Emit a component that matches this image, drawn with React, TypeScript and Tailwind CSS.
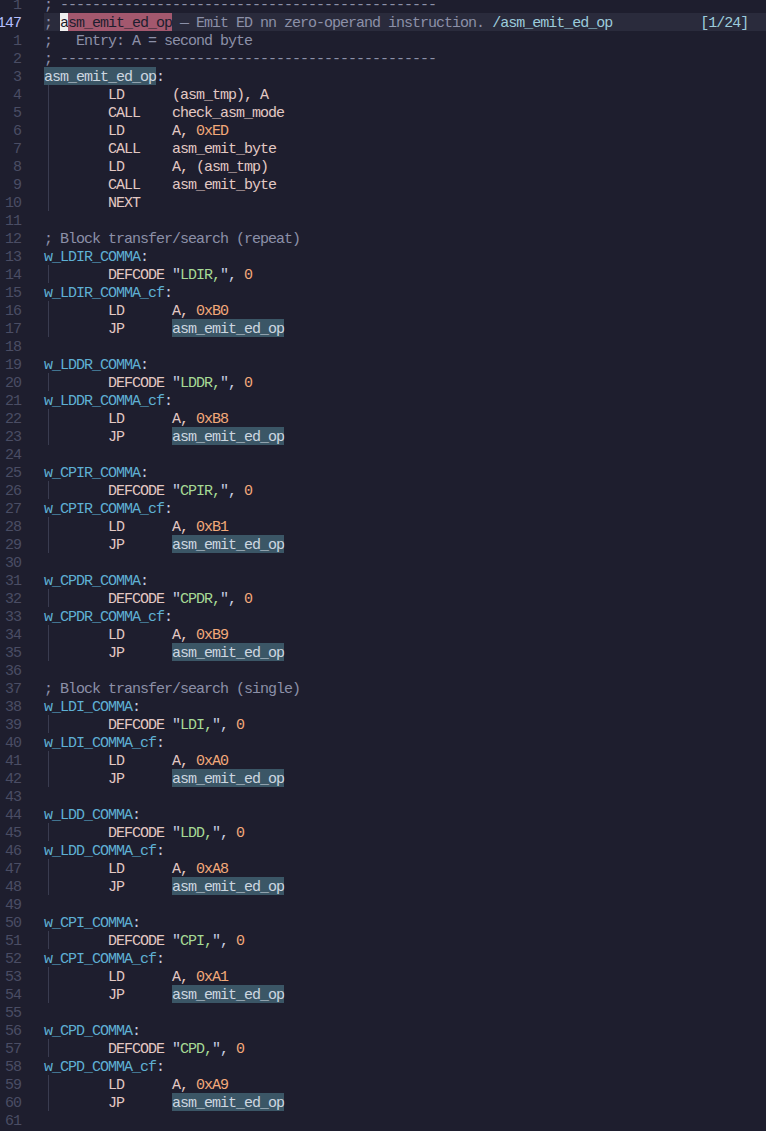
import React from "react";

type Seg = [string, string];
type Row = { segs: Seg[]; guide?: boolean; cur?: boolean };

const cmt = "text-[#8c90a8]";
const txt = "text-[#e2c8c3]";
const lbl = "text-[#5eb0d4]";
const pun = "text-[#c8cde0]";
const num = "text-[#f2a97a]";
const str = "text-[#a6da95]";
const srch = "bg-[#3b5666] text-[#cdd6e0]";
const virt = "text-[#9ccbdb]";

const dashes = "; " + "-".repeat(47);

const label = (name: string, hl = false): Row => ({
  segs: [
    [name, hl ? srch : lbl],
    [":", pun],
  ],
});

const ins = (op: string, ...rest: Seg[]): Row => ({
  guide: true,
  segs: [["       " + op.padEnd(8), txt], ...rest],
});

const block = (name: string, s: string, hex: string): Row[] => [
  label(`w_${name}_COMMA`),
  ins("DEFCODE", ['"', pun], [`${s},`, str], ['"', pun], [", ", pun], ["0", num]),
  label(`w_${name}_COMMA_cf`),
  ins("LD", ["A, ", txt], [hex, num]),
  ins("JP", ["asm_emit_ed_op", srch]),
  { segs: [] },
];

const rows: Row[] = [
  { segs: [[dashes, cmt]] },
  {
    cur: true,
    segs: [
      ["; ", cmt],
      ["a", "bg-[#f0f0f0] text-[#1e1e2e]"],
      ["sm_emit_ed_op", "bg-[#a3586e] text-[#1e1e2e]"],
      [" — Emit ED nn zero-operand instruction. ", cmt],
      ["/asm_emit_ed_op", virt],
      ["           ", cmt],
      ["[1/24]", virt],
    ],
  },
  { segs: [[";   Entry: A = second byte", cmt]] },
  { segs: [[dashes, cmt]] },
  label("asm_emit_ed_op", true),
  ins("LD", ["(asm_tmp), A", txt]),
  ins("CALL", ["check_asm_mode", txt]),
  ins("LD", ["A, ", txt], ["0xED", num]),
  ins("CALL", ["asm_emit_byte", txt]),
  ins("LD", ["A, (asm_tmp)", txt]),
  ins("CALL", ["asm_emit_byte", txt]),
  ins("NEXT"),
  { segs: [] },
  { segs: [["; Block transfer/search (repeat)", cmt]] },
  ...block("LDIR", "LDIR", "0xB0"),
  ...block("LDDR", "LDDR", "0xB8"),
  ...block("CPIR", "CPIR", "0xB1"),
  ...block("CPDR", "CPDR", "0xB9"),
  { segs: [["; Block transfer/search (single)", cmt]] },
  ...block("LDI", "LDI", "0xA0"),
  ...block("LDD", "LDD", "0xA8"),
  ...block("CPI", "CPI", "0xA1"),
  ...block("CPD", "CPD", "0xA9"),
];

function lineNo(i: number) {
  if (i === 0) return "1";
  if (i === 1) return "147";
  return String(i - 1);
}

export default function App() {
  return (
    <div className="h-screen w-full overflow-hidden bg-[#1e1e2e] font-['Liberation_Mono',monospace] text-[15px] leading-[18px] tracking-[-1px]">
      <div className="-mt-[5px] flex flex-col">
        {rows.map((r, i) => (
          <div key={i} className="flex h-[18px]">
            <div
              className={`-ml-[3px] w-[24px] shrink-0 pt-[2px] text-right whitespace-pre ${
                r.cur ? "text-[#b4befe]" : "text-[#4a4d64]"
              }`}
            >
              {lineNo(i)}
            </div>
            <div className={`ml-[23px] flex flex-1 ${r.cur ? "bg-[#2a2b3c]" : ""}`}>
              {r.guide && (
                <span className="inline-block h-[18px] w-[8px] shrink-0">
                  <span className="ml-[4px] block h-full w-px bg-[#3a3c50]" />
                </span>
              )}
              {r.segs.map(([t, c], j) => (
                <span key={j} className={`h-[18px] pt-[2px] whitespace-pre ${c}`}>
                  {t}
                </span>
              ))}
            </div>
          </div>
        ))}
      </div>
    </div>
  );
}
